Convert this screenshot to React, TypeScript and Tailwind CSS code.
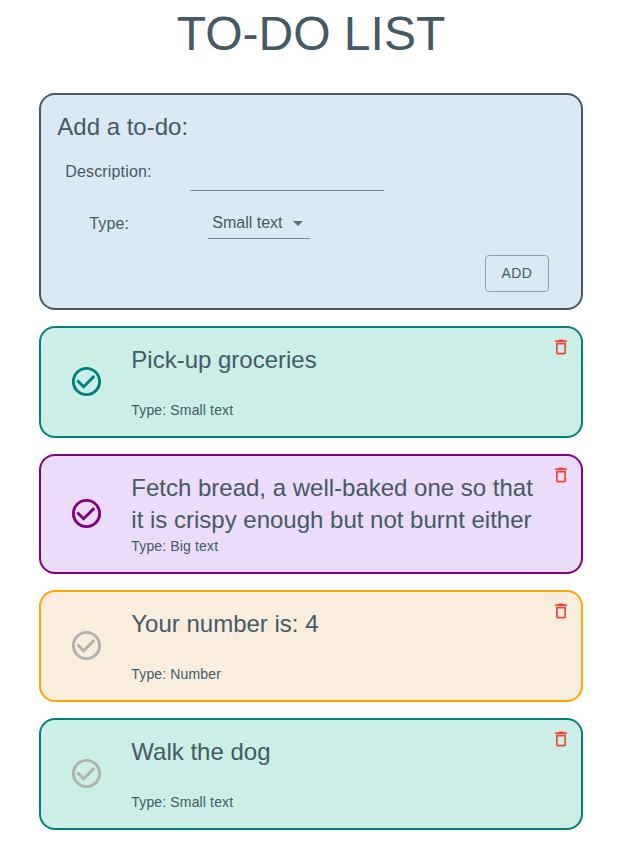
type Todo = { title: string; type: string; card: string; icon: string };

const todos: Todo[] = [
  { title: 'Pick-up groceries', type: 'Small text', card: 'h-28 border-[#008080] bg-[#cbeee6]', icon: 'text-[#008080]' },
  { title: 'Fetch bread, a well-baked one so that it is crispy enough but not burnt either', type: 'Big text', card: 'h-[120px] border-[#800080] bg-[#ebdcf9]', icon: 'text-[#800080]' },
  { title: 'Your number is: 4', type: 'Number', card: 'h-28 border-[#ffa500] bg-[#f9eddd]', icon: 'text-[#b3b0b0]' },
  { title: 'Walk the dog', type: 'Small text', card: 'h-28 border-[#008080] bg-[#cbeee6]', icon: 'text-[#b3b0b0]' },
];

function CheckIcon({ className }: { className: string }) {
  return (
    <svg viewBox="0 0 24 24" className={`size-[35px] shrink-0 ${className}`} fill="currentColor">
      <path d="M16.59 7.58 10 14.17l-3.59-3.58L5 12l5 5 8-8zM12 2C6.48 2 2 6.48 2 12s4.48 10 10 10 10-4.48 10-10S17.52 2 12 2m0 18c-4.42 0-8-3.58-8-8s3.58-8 8-8 8 3.58 8 8-3.58 8-8 8" />
    </svg>
  );
}

function DeleteIcon() {
  return (
    <svg viewBox="0 0 24 24" className="size-5 text-[#f44336]" fill="currentColor">
      <path d="M6 19c0 1.1.9 2 2 2h8c1.1 0 2-.9 2-2V7H6zM8 9h8v10H8zm7.5-5-1-1h-5l-1 1H5v2h14V4z" />
    </svg>
  );
}

function TodoCard({ todo }: { todo: Todo }) {
  return (
    <article className={`flex rounded-2xl border-2 ${todo.card}`}>
      <div className="flex w-[90px] shrink-0 items-center justify-center pb-[2px]">
        <CheckIcon className={todo.icon} />
      </div>
      <div className="ml-[0.3px] flex w-[410px] shrink-0 flex-col justify-between py-4">
        <h2 className="text-2xl leading-8">{todo.title}</h2>
        <p className="text-sm leading-5 tracking-[0.01071em]">Type: {todo.type}</p>
      </div>
      <button className="ml-auto mr-[10px] mt-[9px] size-5" aria-label="Delete">
        <DeleteIcon />
      </button>
    </article>
  );
}

export default function App() {
  return (
    <main className="h-[843px] bg-white pl-[39px] font-['Liberation_Sans',Arial,sans-serif] text-[#455a64]">
      <div className="w-[544px]">
        <h1 className="h-[93px] pt-[6px] text-center text-5xl leading-[56px]">TO-DO LIST</h1>
        <section className="h-[217px] rounded-2xl border-2 border-[#455a64] bg-[#dbe9f4] pl-4 pr-8 pt-4">
          <h2 className="pl-[0.3px] text-2xl leading-8">Add a to-do:</h2>
          <div className="mt-3 flex h-9 pl-2">
            <label className="w-[125px] pt-[5px] pl-[0.3px] tracking-[0.00938em]">Description:</label>
            <div className="w-[194px] border-b border-[#7e8a93]" />
          </div>
          <div className="mt-4 flex h-8 pl-8">
            <label className="w-[119px] pt-[5px] pl-[0.3px] tracking-[0.00938em]">Type:</label>
            <div className="flex h-8 w-[102px] items-center border-b border-[#7e8a93] pl-1">
              <span className="grow whitespace-nowrap pl-[0.3px]">Small text</span>
              <svg viewBox="0 0 24 24" className="size-6 shrink-0 fill-[#637078]"><path d="m7 10 5 5 5-5z" /></svg>
            </div>
          </div>
          <button className="ml-auto mt-4 block h-[37px] w-16 rounded border border-[#90a1ac] pb-[2px] text-sm tracking-[0.02857em]">ADD</button>
        </section>
        <div className="mt-4 flex flex-col gap-4">
          {todos.map((todo) => <TodoCard key={todo.title} todo={todo} />)}
        </div>
      </div>
    </main>
  );
}
